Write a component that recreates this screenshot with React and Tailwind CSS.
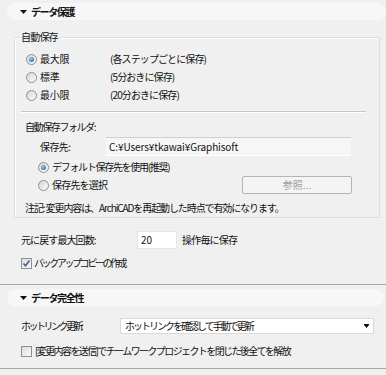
import React from "react";

const Radio = ({ checked }) => (
  <span className="flex h-[11px] w-[11px] shrink-0 items-center justify-center rounded-full border border-[#8e8f8f] bg-linear-to-br from-[#d6d6d6] to-[#fbfbfb]">
    {checked && (
      <span className="h-[5px] w-[5px] rounded-full bg-[radial-gradient(circle_at_40%_35%,#8fd3f7,#1a4c8a)]" />
    )}
  </span>
);

const Checkbox = ({ checked }) => (
  <span className="flex h-[11px] w-[11px] shrink-0 items-center justify-center border border-[#8e8f8f] bg-linear-to-br from-[#dcdcdc] to-[#fafafa]">
    {checked && (
      <svg width="9" height="9" viewBox="0 0 9 9">
        <path d="M1.5 4.5 L3.5 6.8 L7.5 1.5" fill="none" stroke="#4b5d8f" strokeWidth="1.6" />
      </svg>
    )}
  </span>
);

const Section = ({ title, className }) => (
  <div className={`flex h-[17px] items-center rounded-full bg-[#f7f7f7] pl-[13px] ${className}`}>
    <svg width="7" height="4" viewBox="0 0 7 4" className="shrink-0">
      <path d="M0 0 H7 L3.5 4 Z" fill="#111" />
    </svg>
    <span className="ml-[4px] text-[10px] font-bold leading-none">{title}</span>
  </div>
);

const Separator = () => <div className="h-px w-full border-t border-[#a8a8a8]" />;

export default function App() {
  const levels = [
    { label: "最大限", desc: "(各ステップごとに保存)", checked: true },
    { label: "標準", desc: "(5分おきに保存)" },
    { label: "最小限", desc: "(20分おきに保存)" },
  ];

  return (
    <div className="flex h-[375px] w-[386px] flex-col overflow-hidden bg-[#f0f0f0] font-['Noto_Sans_CJK_JP',sans-serif] text-[10px] leading-none text-[#111]">
      {/* データ保護 */}
      <Section title="データ保護" className="mt-[3px] ml-[7px] tracking-[-1.4px]" />

      {/* 自動保存 group box */}
      <div className="relative mt-[17px] ml-[14px] flex h-[181px] w-[366px] flex-col border border-[#d5dfe5] shadow-[inset_1px_1px_0_#ffffff]">
        <span className="absolute -top-[7px] left-[5px] bg-[#f0f0f0] px-px leading-[12px] tracking-[-0.8px]">
          自動保存
        </span>

        <div className="mt-[12px] flex flex-col">
          {levels.map((lv) => (
            <div key={lv.label} className="flex h-[18px] items-center pl-[11px]">
              <Radio checked={lv.checked} />
              <span className="ml-[3px] w-[70px] tracking-[-0.3px]">{lv.label}</span>
              <span className="tracking-[-0.9px]">{lv.desc}</span>
            </div>
          ))}
        </div>

        <div className="mt-[7px] ml-[6px] h-[2px] w-[345px] border-t border-b border-t-[#c6c6c6] border-b-white" />

        <div className="mt-[6px] flex h-[16px] items-center pl-[10px] tracking-[-1.4px]">
          自動保存フォルダ:
        </div>

        <div className="mt-[2px] flex h-[19px] items-center pl-[25px]">
          <span className="w-[66px] tracking-[-0.6px]">保存先:</span>
          <div className="flex h-full w-[245px] items-center border-t border-b border-t-[#cfcfcf] border-b-white bg-[#f6f6f6] pl-[3px] tracking-[-0.1px]">
            C:¥Users¥tkawai¥Graphisoft
          </div>
        </div>

        <div className="mt-[2px] flex h-[18px] items-center pl-[23px]">
          <Radio checked />
          <span className="ml-[3px] tracking-[-1.3px]">デフォルト保存先を使用(推奨)</span>
        </div>

        <div className="flex h-[18px] items-center pl-[23px]">
          <Radio />
          <span className="ml-[3px] tracking-[-0.8px]">保存先を選択</span>
          <button className="mr-[27px] ml-auto flex h-[18px] w-[110px] items-center justify-center rounded-[2px] border border-[#b4b4b4] bg-[#f4f4f4] text-[#9c9c9c]">
            参照...
          </button>
        </div>

        <div className="mt-[6px] flex h-[16px] items-center pl-[10px] tracking-[-1.1px]">
          注記: 変更内容は、ArchiCADを再起動した時点で有効になります。
        </div>
      </div>

      {/* 元に戻す */}
      <div className="mt-[13px] flex h-[18px] items-center pl-[21px]">
        <span className="w-[116px] tracking-[-0.9px]">元に戻す最大回数:</span>
        <div className="flex h-full w-[40px] items-center border border-[#e6e6e6] bg-white pl-[3px]">20</div>
        <span className="ml-[5px] tracking-[-0.8px]">操作毎に保存</span>
      </div>

      <div className="mt-[6px] flex h-[16px] items-center pl-[21px]">
        <Checkbox checked />
        <span className="ml-[2px] tracking-[-2.4px]">バックアップコピーの作成</span>
      </div>

      <div className="mt-[13px]">
        <Separator />
      </div>

      {/* データ完全性 */}
      <Section title="データ完全性" className="mt-[4px] mr-[2px] ml-[7px] tracking-[-1.3px]" />

      <div className="mt-[12px] flex h-[16px] items-center pl-[21px]">
        <span className="w-[99px] tracking-[-2.5px]">ホットリンク更新:</span>
        <div className="flex h-full w-[254px] items-center border border-[#d9d9d9] bg-white pl-[4px]">
          <span className="tracking-[-2px]">ホットリンクを確認して手動で更新</span>
          <svg width="5" height="4" viewBox="0 0 5 4" className="mr-[4px] ml-auto">
            <path d="M0 0 H5 V1 H0 Z M0 1 H5 L2.5 4 Z" fill="#111" />
          </svg>
        </div>
      </div>

      <div className="mt-[9px] flex h-[16px] items-center pl-[21px]">
        <Checkbox />
        <span className="ml-[3px] tracking-[-1.6px]">[変更内容を送信]でチームワークプロジェクトを閉じた後全てを解放</span>
      </div>

      <div className="mt-[9px]">
        <Separator />
      </div>
    </div>
  );
}
